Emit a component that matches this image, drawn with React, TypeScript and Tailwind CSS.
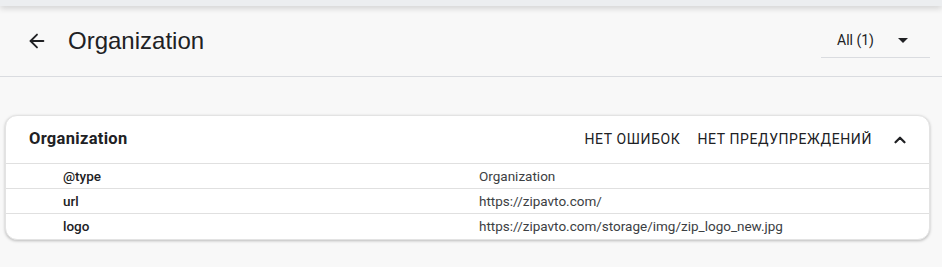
import { ArrowLeft, ChevronUp } from 'lucide-react'

const rows = [
  { key: '@type', value: 'Organization' },
  { key: 'url', value: 'https://zipavto.com/' },
  { key: 'logo', value: 'https://zipavto.com/storage/img/zip_logo_new.jpg' },
]

export default function App() {
  return (
    <div className="w-[942px] h-[267px] overflow-hidden bg-[#f8f8f8] font-['Roboto',sans-serif] text-[#202124]">
      {/* top strip */}
      <div className="h-[6px] bg-[#eceef0] shadow-[0_2px_6px_rgba(0,0,0,0.18)]" />

      {/* page header */}
      <div className="flex items-center h-[71px] border-b border-[#dadce0] pl-[26px] pr-[12px]">
        <ArrowLeft className="w-[22px] h-[22px] text-[#202124]" strokeWidth={2} />
        <h1 className="ml-[20px] text-[24px] font-['Liberation_Sans',sans-serif] text-[#202124] leading-none">Organization</h1>
        <div className="ml-auto flex items-center w-[109px] h-[34px] border-b border-[#dadce0] pl-[16px] pr-[22px]">
          <span className="text-[14px] text-[#202124]">All (1)</span>
          <span className="ml-auto w-0 h-0 border-l-[5px] border-r-[5px] border-t-[5px] border-l-transparent border-r-transparent border-t-[#202124]" />
        </div>
      </div>

      {/* result card */}
      <div className="mt-[38px] ml-[5px] w-[925px] bg-white rounded-[12px] border border-[#e3e3e3] shadow-[0_1px_3px_rgba(0,0,0,0.25)] overflow-hidden">
        <div className="flex items-center h-[48px] pl-[23px] pr-[20px] border-b border-[#e0e0e0]">
          <span className="text-[16.5px] font-bold tracking-[0.3px]">Organization</span>
          <span className="ml-auto text-[14px] tracking-[0.6px] text-[#202124]">НЕТ ОШИБОК</span>
          <span className="ml-[17px] text-[14px] tracking-[0.6px] text-[#202124]">НЕТ ПРЕДУПРЕЖДЕНИЙ</span>
          <ChevronUp className="ml-[19px] w-[18px] h-[18px]" strokeWidth={3} />
        </div>
        {rows.map((r, i) => (
          <div
            key={r.key}
            className={`grid grid-cols-[473px_1fr] items-center h-[25px] text-[13.5px] ${i < rows.length - 1 ? 'border-b border-[#e0e0e0]' : ''}`}
          >
            <span className="pl-[57px] font-medium">{r.key}</span>
            <span className="text-[#3c4043]">{r.value}</span>
          </div>
        ))}
      </div>
    </div>
  )
}
